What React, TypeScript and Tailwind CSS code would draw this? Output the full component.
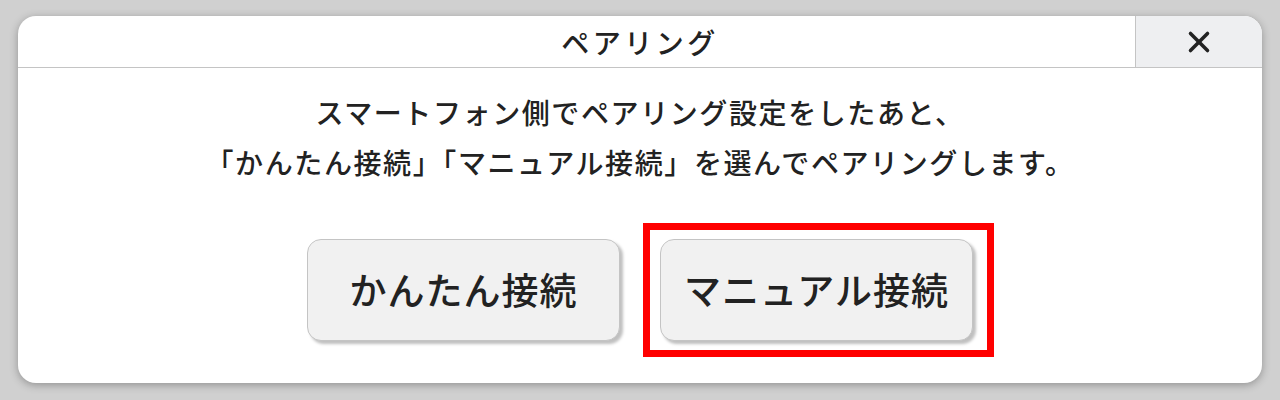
import { X } from "lucide-react";

const font = {
  fontFamily: '"Noto Sans CJK JP", "Noto Sans", sans-serif',
};

function PairButton({ label }: { label: string }) {
  return (
    <button className="w-[313px] h-[102px] rounded-[14px] border border-[#c4c4c4] bg-[#f1f1f1] text-[37px] font-medium text-[#222] tracking-[1px] shadow-[3px_3px_3px_rgba(0,0,0,0.25)]">
      {label}
    </button>
  );
}

export default function App() {
  return (
    <div className="h-[400px] w-[1280px] bg-[#d0d0d0] pt-[16px] pl-[18px] pr-[18px] pb-[17px]" style={font}>
      <div className="flex h-full flex-col overflow-hidden rounded-[18px] bg-white shadow-[0_2px_8px_rgba(0,0,0,0.3)]">
        <header className="flex h-[52px] shrink-0 border-b border-[#c4c4c4]">
          <div className="flex flex-1 items-center justify-center pl-[127px]">
            <h1 className="text-[28px] font-medium tracking-[3.5px] text-[#222]">ペアリング</h1>
          </div>
          <button className="flex w-[127px] items-center justify-center border-l border-[#c4c4c4] bg-[#eeeff1] text-[#222]">
            <X size={34} strokeWidth={2.5} />
          </button>
        </header>

        <div className="flex flex-col items-center pt-[19px]">
          <p className="text-center text-[28px] font-medium leading-[50px] tracking-[1.6px] text-[#222]">
            スマートフォン側でペアリング設定をしたあと、
            <br />
            「かんたん接続」「マニュアル接続」を選んでペアリングします。
          </p>

          <div className="mt-[52px] flex gap-[40px]">
            <PairButton label="かんたん接続" />
            <div className="relative">
              <PairButton label="マニュアル接続" />
              <div className="pointer-events-none absolute -left-[17px] -top-[16px] -right-[21px] -bottom-[16px] border-[7px] border-[#ff0000]" />
            </div>
          </div>
        </div>
      </div>
    </div>
  );
}
